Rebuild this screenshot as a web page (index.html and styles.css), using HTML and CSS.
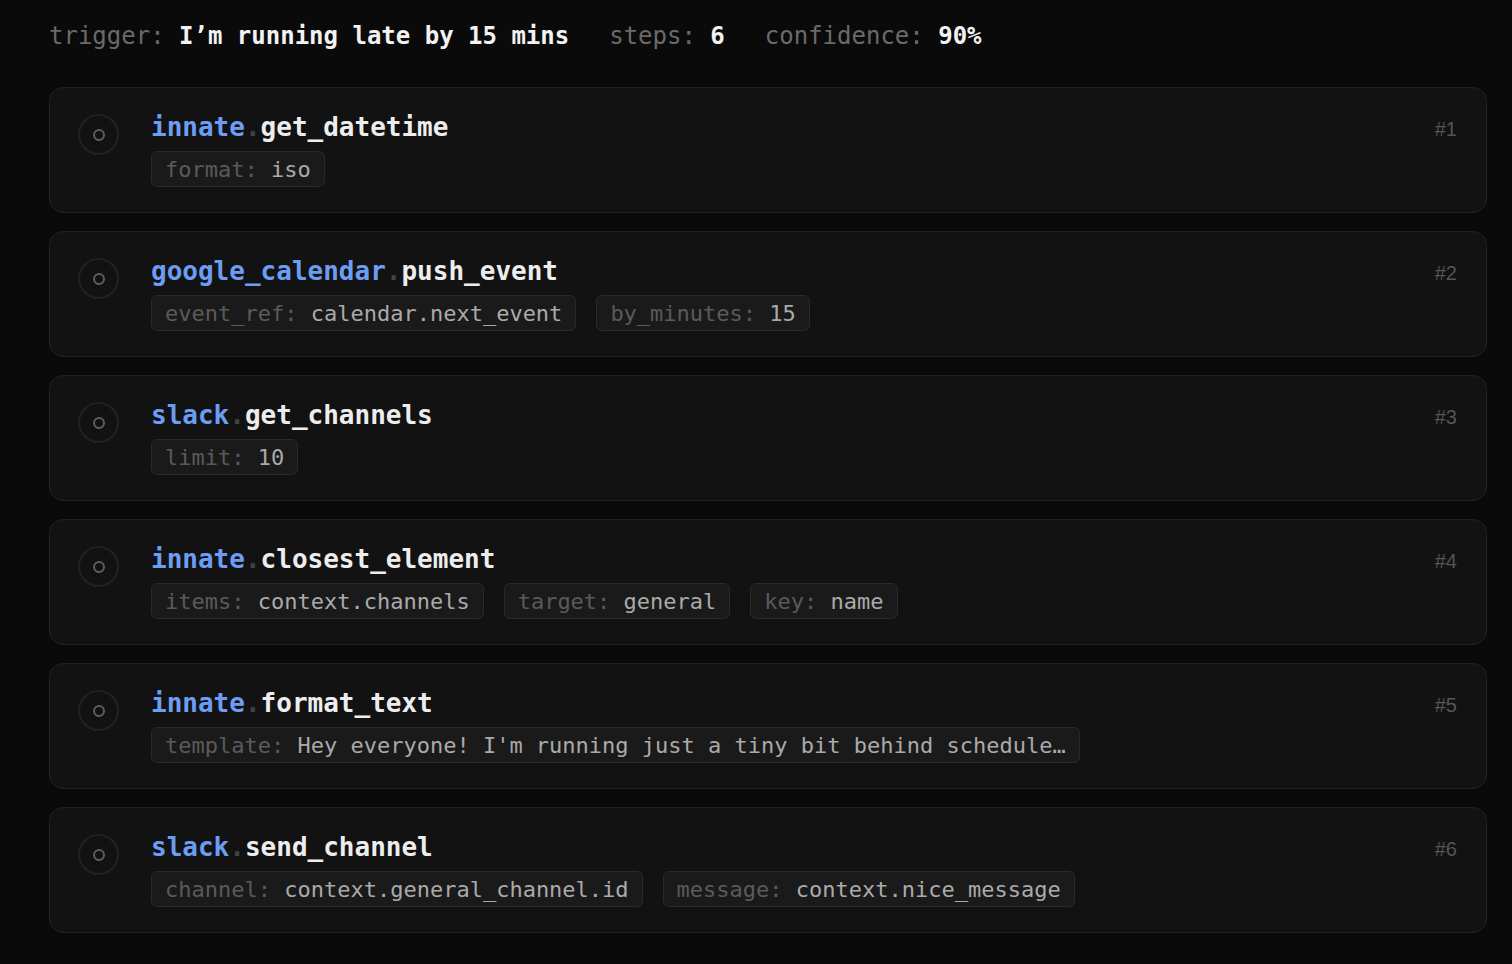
FILE: index.html
```html
<!DOCTYPE html>
<html lang="en">
<head>
<meta charset="utf-8">
<title>Plan</title>
<link rel="stylesheet" href="styles.css">
</head>
<body>
<main class="page">
  <header class="summary">
    <span class="stat"><span class="label">trigger: </span><b>I’m running late by 15 mins</b></span>
    <span class="stat"><span class="label">steps: </span><b>6</b></span>
    <span class="stat"><span class="label">confidence: </span><b>90%</b></span>
  </header>

  <section class="steps">
    <article class="step">
      <div class="status"><span class="dot"></span></div>
      <div class="body">
        <h2 class="call"><span class="ns">innate</span><span class="sep">.</span><span class="fn">get_datetime</span></h2>
        <div class="params">
          <span class="param"><span class="key">format: </span><span class="val">iso</span></span>
        </div>
      </div>
      <span class="num">#1</span>
    </article>

    <article class="step">
      <div class="status"><span class="dot"></span></div>
      <div class="body">
        <h2 class="call"><span class="ns">google_calendar</span><span class="sep">.</span><span class="fn">push_event</span></h2>
        <div class="params">
          <span class="param"><span class="key">event_ref: </span><span class="val">calendar.next_event</span></span>
          <span class="param"><span class="key">by_minutes: </span><span class="val">15</span></span>
        </div>
      </div>
      <span class="num">#2</span>
    </article>

    <article class="step">
      <div class="status"><span class="dot"></span></div>
      <div class="body">
        <h2 class="call"><span class="ns">slack</span><span class="sep">.</span><span class="fn">get_channels</span></h2>
        <div class="params">
          <span class="param"><span class="key">limit: </span><span class="val">10</span></span>
        </div>
      </div>
      <span class="num">#3</span>
    </article>

    <article class="step">
      <div class="status"><span class="dot"></span></div>
      <div class="body">
        <h2 class="call"><span class="ns">innate</span><span class="sep">.</span><span class="fn">closest_element</span></h2>
        <div class="params">
          <span class="param"><span class="key">items: </span><span class="val">context.channels</span></span>
          <span class="param"><span class="key">target: </span><span class="val">general</span></span>
          <span class="param"><span class="key">key: </span><span class="val">name</span></span>
        </div>
      </div>
      <span class="num">#4</span>
    </article>

    <article class="step">
      <div class="status"><span class="dot"></span></div>
      <div class="body">
        <h2 class="call"><span class="ns">innate</span><span class="sep">.</span><span class="fn">format_text</span></h2>
        <div class="params">
          <span class="param"><span class="key">template: </span><span class="val">Hey everyone! I'm running just a tiny bit behind schedule…</span></span>
        </div>
      </div>
      <span class="num">#5</span>
    </article>

    <article class="step">
      <div class="status"><span class="dot"></span></div>
      <div class="body">
        <h2 class="call"><span class="ns">slack</span><span class="sep">.</span><span class="fn">send_channel</span></h2>
        <div class="params">
          <span class="param"><span class="key">channel: </span><span class="val">context.general_channel.id</span></span>
          <span class="param"><span class="key">message: </span><span class="val">context.nice_message</span></span>
        </div>
      </div>
      <span class="num">#6</span>
    </article>
  </section>
</main>
</body>
</html>
```

FILE: styles.css
```css
* { box-sizing: border-box; }

html, body {
  margin: 0;
  padding: 0;
  background: #0a0a0a;
  height: 100%;
}

body {
  font-family: "DejaVu Sans Mono", "Liberation Mono", monospace;
  color: #e8e8e8;
}

.page {
  padding: 18px 25px 0 49px;
}

.summary {
  display: flex;
  gap: 40px;
  font-size: 24px;
  line-height: 36px;
  height: 36px;
  margin-bottom: 33px;
  white-space: pre;
}

.summary .label {
  color: #6a6a6a;
}

.summary b {
  color: #f2f2f2;
  font-weight: 700;
}

.steps {
  display: flex;
  flex-direction: column;
  gap: 18px;
}

.step {
  display: flex;
  align-items: flex-start;
  gap: 32px;
  height: 126px;
  background: #121212;
  border: 1px solid #222222;
  border-radius: 14px;
  padding: 23px 29px 25px 28px;
}

.status {
  flex: none;
  width: 41px;
  height: 41px;
  margin-top: 3px;
  border: 2px solid #222222;
  border-radius: 50%;
  display: flex;
  align-items: center;
  justify-content: center;
}

.dot {
  width: 12px;
  height: 12px;
  border: 2px solid #5e5e5e;
  border-radius: 50%;
}

.body {
  flex: 1;
  min-width: 0;
  display: flex;
  flex-direction: column;
  gap: 8px;
}

.call {
  margin: 0;
  height: 32px;
  font-size: 26px;
  line-height: 32px;
  font-weight: 700;
  white-space: pre;
}

.ns { color: #6b9ef3; }
.sep { color: #444444; }
.fn { color: #ededed; }

.params {
  display: flex;
  flex-wrap: wrap;
  gap: 20px;
}

.param {
  display: inline-flex;
  align-items: center;
  height: 36px;
  padding: 0 13px;
  background: #1a1a1a;
  border: 1px solid #2a2a2a;
  border-radius: 6px;
  font-size: 22px;
  white-space: pre;
}

.key { color: #5a5a5a; }
.val { color: #aaaaaa; }

.num {
  flex: none;
  margin-top: 6px;
  font-family: "Liberation Sans", Arial, sans-serif;
  font-size: 20px;
  line-height: 24px;
  color: #555555;
}
```
